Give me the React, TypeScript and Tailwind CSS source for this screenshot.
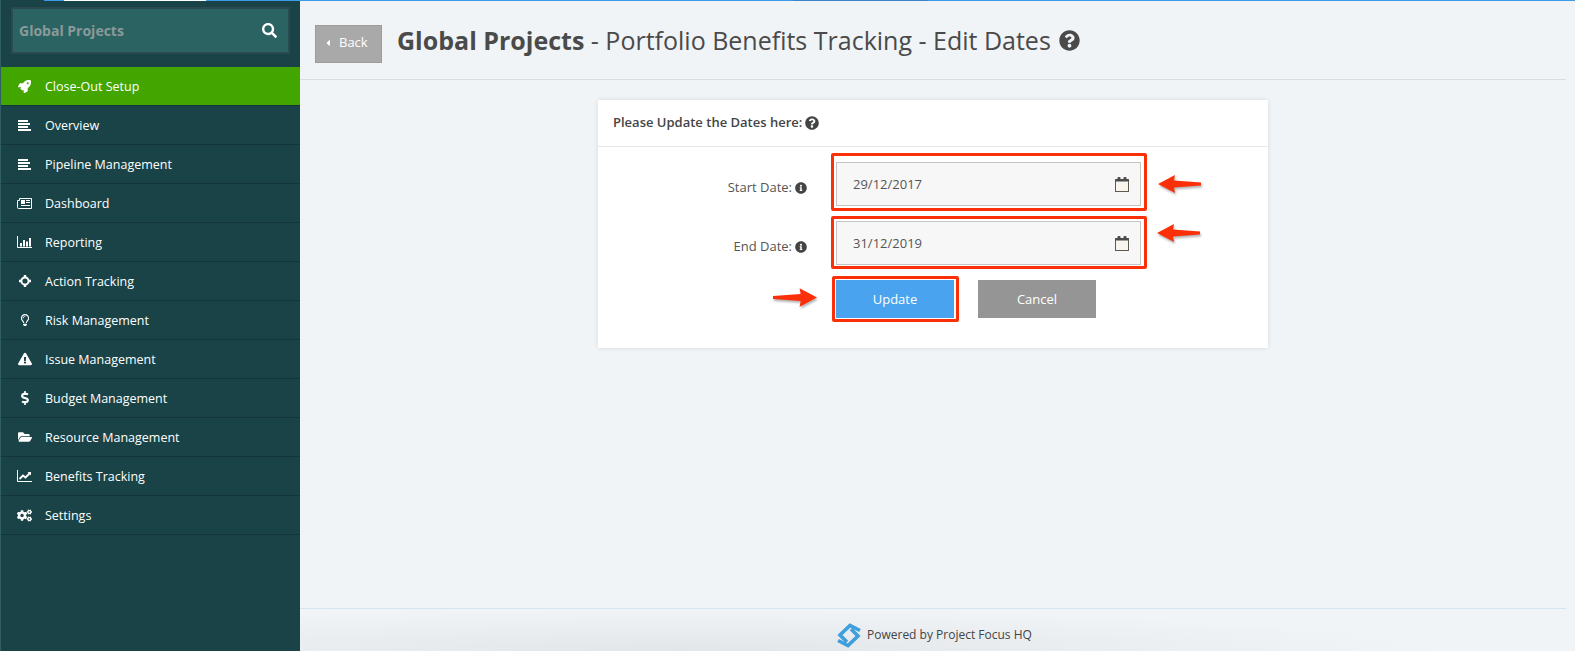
import {
  FaCaretLeft,
  FaCogs,
  FaDollarSign,
  FaExclamationTriangle,
  FaFolderOpen,
  FaInfoCircle,
  FaQuestionCircle,
  FaRegLightbulb,
  FaRocket,
  FaSearch,
} from "react-icons/fa";
import type { ReactNode } from "react";

function AlignIcon() {
  return (
    <svg className="w-[13px] h-[11px]" viewBox="0 0 13 11" fill="currentColor">
      <rect x="0" y="0" width="10" height="2" />
      <rect x="0" y="3" width="12" height="2" />
      <rect x="0" y="6" width="10" height="2" />
      <rect x="0" y="9" width="13" height="2" />
    </svg>
  );
}

function NewsIcon() {
  return (
    <svg className="w-[15px] h-[11px]" viewBox="0 0 15 11" fill="currentColor">
      <path d="M2.5 0.5H14.5V10.5H1.5Q0.5 10.5 0.5 9.5V2.5H2.5Z" fill="none" stroke="currentColor" />
      <rect x="4" y="2" width="4" height="4" />
      <rect x="9" y="2" width="4" height="1" />
      <rect x="9" y="4" width="4" height="1" />
      <rect x="4" y="7" width="9" height="1" />
    </svg>
  );
}

function BarsIcon() {
  return (
    <svg className="w-[15px] h-[12px]" viewBox="0 0 15 12" fill="currentColor">
      <path d="M0.5 0V11.5H15" fill="none" stroke="currentColor" />
      <rect x="3" y="7" width="2" height="3.5" />
      <rect x="6" y="4" width="2" height="6.5" />
      <rect x="9" y="5.5" width="2" height="5" />
      <rect x="12" y="2" width="2" height="8.5" />
    </svg>
  );
}

function TargetIcon() {
  return (
    <svg className="w-[12px] h-[12px]" viewBox="0 0 12 12" fill="none" stroke="currentColor">
      <circle cx="6" cy="6" r="3.6" strokeWidth="2" />
      <path d="M6 0V3M6 9V12M0 6H3M9 6H12" strokeWidth="2.4" />
    </svg>
  );
}

function TrendIcon() {
  return (
    <svg className="w-[15px] h-[12px]" viewBox="0 0 15 12" fill="none" stroke="currentColor">
      <path d="M0.5 0V11.5H15" />
      <path d="M2.5 9L6 5.5L8.5 7.5L13 3" strokeWidth="1.8" />
      <path d="M10.5 2H14V5.5Z" fill="currentColor" stroke="none" />
    </svg>
  );
}

const menu: { label: string; icon: ReactNode; active?: boolean }[] = [
  { label: "Close-Out Setup", icon: <FaRocket className="w-[13px] h-[13px]" />, active: true },
  { label: "Overview", icon: <AlignIcon /> },
  { label: "Pipeline Management", icon: <AlignIcon /> },
  { label: "Dashboard", icon: <NewsIcon /> },
  { label: "Reporting", icon: <BarsIcon /> },
  { label: "Action Tracking", icon: <TargetIcon /> },
  { label: "Risk Management", icon: <FaRegLightbulb className="w-[12px] h-[12px]" /> },
  { label: "Issue Management", icon: <FaExclamationTriangle className="w-[14px] h-[14px]" /> },
  { label: "Budget Management", icon: <FaDollarSign className="w-[12px] h-[14px]" /> },
  { label: "Resource Management", icon: <FaFolderOpen className="w-[14px] h-[14px]" /> },
  { label: "Benefits Tracking", icon: <TrendIcon /> },
  { label: "Settings", icon: <FaCogs className="w-[15px] h-[15px]" /> },
];

function CalendarIcon() {
  return (
    <svg className="w-[14px] h-[15px]" viewBox="0 0 14 15">
      <rect x="0.5" y="2.5" width="13" height="12" fill="#f7f5ee" stroke="#5f5850" />
      <rect x="0.5" y="2.5" width="13" height="2" fill="#4a4a4a" />
      <rect x="2.5" y="0" width="3" height="4" rx="1" fill="#4a4a4a" />
      <rect x="8.5" y="0" width="3" height="4" rx="1" fill="#4a4a4a" />
    </svg>
  );
}

function RedArrow({ className, left }: { className: string; left?: boolean }) {
  return (
    <svg
      className={`absolute drop-shadow-[1px_2px_1px_rgba(0,0,0,0.3)] ${className}`}
      viewBox="0 0 44 18"
    >
      {left ? (
        <path d="M0 9 L17 0 L16 5.5 L43 7.5 L43 10.5 L16 12.5 L17 18 Z" fill="#fb3009" />
      ) : (
        <path d="M44 9 L27 0 L28 5.5 L1 7.5 L1 10.5 L28 12.5 L27 18 Z" fill="#fb3009" />
      )}
    </svg>
  );
}

function DateField({ label, value }: { label: string; value: string }) {
  return (
    <div className="flex items-center">
      <div className="w-[209px] flex items-center justify-end gap-[3px] pt-[8px] text-[13px] text-[#555]">
        <span>{label}</span>
        <FaInfoCircle className="w-[12px] h-[12px] text-[#444]" />
      </div>
      <div className="ml-[29px] w-[305px] h-[44px] flex items-center justify-between pl-[16px] pr-[11px] bg-[#f7f7f7] border border-[#c4c4c4] text-[13px] text-[#555]">
        <span className="pt-[2px]">{value}</span>
        <CalendarIcon />
      </div>
    </div>
  );
}

export default function App() {
  return (
    <div className="relative flex w-[1575px] h-[651px] overflow-hidden bg-[#f0f4f7] font-['Open_Sans',sans-serif]">
      {/* top loading strip */}
      <div className="absolute top-0 left-[44px] right-0 h-px bg-[#3d9be9] z-10" />
      <div className="absolute top-0 left-[64px] w-[142px] h-px bg-white z-10" />
      <div className="absolute top-0 left-[793px] w-[135px] h-px bg-[#3a85c8] z-10" />

      <aside className="w-[300px] shrink-0 bg-[#194347] border-l border-[#2f5f63]">
        <div className="pt-[7px] px-[10px]">
          <div className="h-[47px] flex items-center justify-between pl-[6px] pr-[11px] bg-[#2a6361] border-2 border-[#2b4a50]">
            <span className="text-[14px] font-bold text-[#8a9a9a]">Global Projects</span>
            <FaSearch className="w-[15px] h-[15px] text-white" />
          </div>
        </div>
        <nav className="mt-[13px]">
          {menu.map((item) => (
            <div
              key={item.label}
              className={`h-[39px] flex items-center border-b border-[#12343a] text-[12.5px] text-white ${
                item.active ? "bg-[#42a500]" : ""
              }`}
            >
              <div className="w-[44px] flex justify-center pl-[3px]">{item.icon}</div>
              <span className="pt-[2px]">{item.label}</span>
            </div>
          ))}
        </nav>
      </aside>

      <main className="flex-1 flex flex-col pr-[9px]">
        <header className="h-[80px] shrink-0 flex items-start border-b border-[#d5dde5] pt-[25px] pl-[15px]">
          <button className="w-[67px] h-[38px] flex items-center bg-[#a9a9a9] border border-[#9d9d9d] pl-[7px] pb-[2px] text-[13px] text-white">
            <FaCaretLeft className="w-[10px] h-[10px] mr-[6px]" />
            Back
          </button>
          <h1 className="ml-[15px] -mt-[2px] flex items-center text-[25px] leading-[34px] text-[#4a4a4a]">
            <span>
              <span className="font-bold">Global Projects</span> - Portfolio Benefits Tracking - Edit Dates
            </span>
            <FaQuestionCircle className="ml-[8px] w-[21px] h-[21px]" />
          </h1>
        </header>

        <div className="flex-1 pt-[20px] pl-[298px]">
          <section className="w-[670px] bg-white shadow-[0_0_5px_rgba(0,0,0,0.1)]">
            <div className="h-[47px] flex items-center gap-[3px] pl-[15px] border-b border-[#e8e8e8] text-[13px] font-semibold text-[#444]">
              <span>Please Update the Dates here:</span>
              <FaQuestionCircle className="w-[14px] h-[14px]" />
            </div>
            <div className="flex flex-col gap-[15px] pt-[15px] pb-[30px]">
              <DateField label="Start Date:" value="29/12/2017" />
              <DateField label="End Date:" value="31/12/2019" />
              <div className="flex gap-[24px] pl-[238px]">
                <button className="w-[118px] h-[38px] pt-[2px] bg-[#4aa3ee] text-[13px] font-medium text-white">Update</button>
                <button className="w-[118px] h-[38px] pt-[2px] bg-[#959595] text-[13px] font-medium text-white">Cancel</button>
              </div>
            </div>
          </section>
        </div>

        <footer className="h-[43px] shrink-0 flex items-start pl-[537px] pt-[14px] border-t border-[#d5e4f0] bg-[radial-gradient(ellipse_750px_42px_at_30%_100%,#e2e6e9,#f0f4f7)]">
          <svg className="w-[24px] h-[25px] shrink-0" viewBox="0 0 24 25" fill="none" stroke="#3f9fdc" strokeWidth="3.6">
            <path d="M23 7.5 L13 2.5 L3 12 L10 19" />
            <path d="M1 17.5 L11 22.5 L21 13 L14 6" />
          </svg>
          <span className="ml-[6px] mt-[3px] text-[12px] text-[#444]">Powered by Project Focus HQ</span>
        </footer>
      </main>

      {/* red review annotations drawn on top of the screenshot */}
      <div className="absolute left-[831px] top-[153px] w-[316px] h-[58px] border-[3px] border-[#fb3009] rounded-[2px]" />
      <div className="absolute left-[831px] top-[216px] w-[316px] h-[53px] border-[3px] border-[#fb3009] rounded-[2px]" />
      <div className="absolute left-[832px] top-[276px] w-[127px] h-[46px] border-[3px] border-[#fb3009] rounded-[2px]" />
      <RedArrow left className="left-[1158px] top-[175px] w-[44px] h-[18px]" />
      <RedArrow left className="left-[1157px] top-[224px] w-[44px] h-[18px]" />
      <RedArrow className="left-[772px] top-[288px] w-[45px] h-[19px]" />
    </div>
  );
}
